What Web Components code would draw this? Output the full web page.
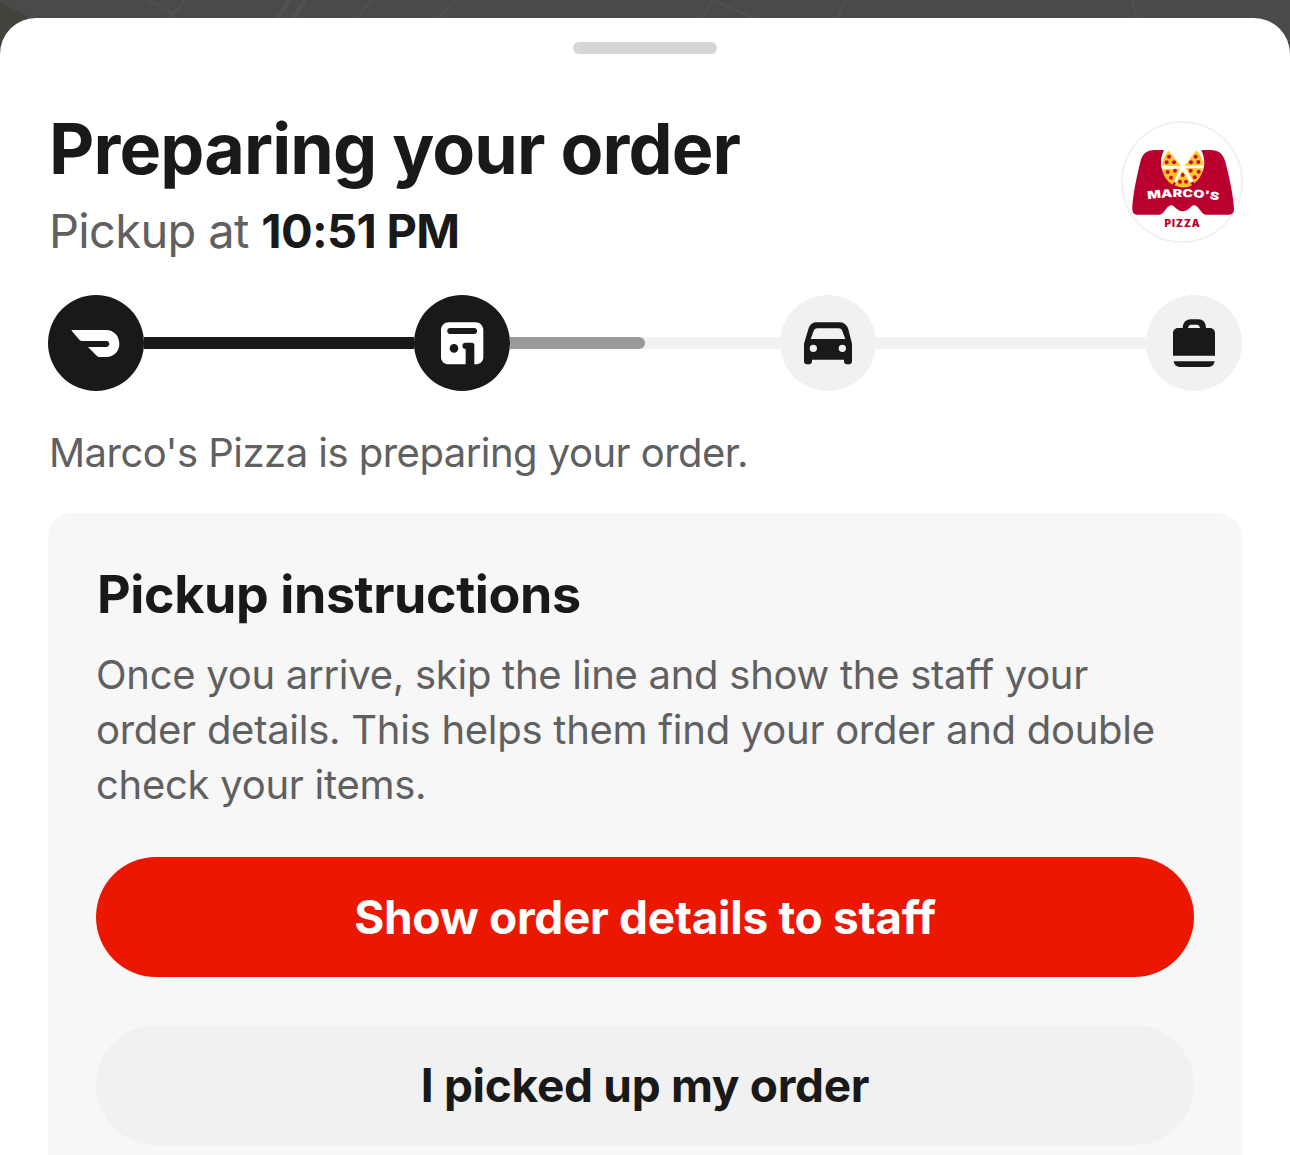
<!DOCTYPE html>
<html><head><meta charset="utf-8">
<style>
html,body{margin:0;padding:0;height:1155px;overflow:hidden;background:#4a4a4a}
</style></head><body>
<map-backdrop></map-backdrop>
<order-sheet></order-sheet>
<template id="map-t">
<style>:host{display:block;position:absolute;left:0;top:0;width:1290px;height:60px}svg{display:block}</style>
<svg width="1290" height="60" viewBox="0 0 1290 60"><path d="M0 2L28 17L0 52Z" fill="#40443a"/>
<g fill="none" stroke="#505050" stroke-width="2.5"><path d="M147 0L172 13M185 0L170 18M372 0L357 18M455 0L438 18M713 0L702 18M713 0L753 18M847 0L837 18M1132 0L1137 18"/></g>
<g fill="none" stroke="#505050" stroke-width="5"><path d="M290 0L277 18M305 0L293 18"/></g></svg>
</template>
<template id="sheet-t">
<style>
:host{display:block;position:relative;margin-top:18px;height:1137px;background:#fff;border-radius:36px 36px 0 0;font-family:Inter,"Liberation Sans",sans-serif;color:#191919;overflow:hidden;box-sizing:border-box;padding:24px 48px 0}
.handle{width:144px;height:12px;border-radius:6px;background:#d6d6d6;margin:0 auto}
header{display:flex;justify-content:space-between;margin-top:55px;padding-left:1px;height:186px}
h1{margin:0;font-size:70px;line-height:80px;font-weight:700;letter-spacing:-.85px}
.sub{font-size:47px;line-height:60px;color:#606060;margin-top:12px;letter-spacing:-.65px}
.sub b{color:#191919;font-weight:700}
.status{font-size:40px;line-height:56px;color:#606060;margin:34px 0 32px 1px;letter-spacing:-.53px}
</style>
<div class="handle"></div>
<header>
 <div><h1>Preparing your order</h1><div class="sub">Pickup at <b>10:51 PM</b></div></div>
 <store-logo></store-logo>
</header>
<order-progress></order-progress>
<div class="status">Marco's Pizza is preparing your order.</div>
<pickup-card></pickup-card>
</template>
<template id="logo-t">
<style>:host{display:block;width:122px;height:122px;margin:12px -1px 0 0}svg{display:block}</style>
<svg width="122" height="122" viewBox="63 63 366 366">
<circle cx="246" cy="246" r="180" fill="#fff" stroke="#f1f1f1" stroke-width="6"/>
<path d="M97 328C97 290 112 220 122 182C128 160 142 150 165 150H192C180 175 178 205 197 228C212 245 232 252 248 252C270 252 288 244 300 228C318 205 315 175 304 150H332C354 150 368 160 375 182C387 225 402 295 402 328C402 338 396 344 388 344H318C310 344 306 338 300 330C294 322 288 314 280 316C272 318 265 334 248 334C232 334 224 318 216 316C208 314 202 322 196 330C190 338 186 344 178 344H110C102 344 97 338 97 328Z" fill="#b9002f"/>
<g fill="#ffc425">
<path d="M243 198L206 152A66 66 0 0 0 187 197Z"/>
<path d="M254 198L289 151A66 66 0 0 1 309 195Z"/>
<path d="M240 206L187 207A62 62 0 0 0 218 254Z"/>
<path d="M248 212L224 256A58 58 0 0 0 276 256Z"/>
<path d="M257 204L308 205A62 62 0 0 1 283 250Z"/>
</g>
<g fill="#c8102e">
<circle cx="207" cy="170" r="6"/><circle cx="200" cy="187" r="6"/><circle cx="222" cy="187" r="6"/>
<circle cx="287" cy="170" r="6"/><circle cx="273" cy="187" r="6"/><circle cx="295" cy="186" r="6"/>
<circle cx="203" cy="216" r="6"/><circle cx="225" cy="212" r="6"/><circle cx="213" cy="233" r="6"/>
<circle cx="248" cy="225" r="6"/><circle cx="240" cy="245" r="6"/><circle cx="258" cy="245" r="6"/>
<circle cx="272" cy="212" r="6"/><circle cx="296" cy="215" r="6"/><circle cx="284" cy="232" r="6"/>
</g>
<path id="arc" d="M143 298Q250 282 358 302" fill="none"/>
<text font-family="Inter,sans-serif" font-weight="900" font-size="33" fill="#fff" textLength="214" lengthAdjust="spacingAndGlyphs"><textPath href="#arc">MARCO'S</textPath></text>
<text x="248" y="382" text-anchor="middle" font-family="Inter,sans-serif" font-weight="900" font-size="30" fill="#b9002f" letter-spacing="3">PIZZA</text>
</svg>
</template>
<template id="progress-t">
<style>
:host{display:block;margin-top:0}
.row{display:flex;align-items:center}
.dot{width:96px;height:96px;flex:none;border-radius:50%;background:#f1f1f1;display:block}
.dot.on{background:#191919}
.dot svg{display:block}
.seg{flex:1;height:12px;background:#f1f1f1;display:flex}
.seg i{display:block;height:12px}
.seg.done{background:#191919}
.seg .part{width:50%;background:#999;border-radius:0 6px 6px 0}
</style>
<div class="row">
<span class="dot on"><svg width="96" height="96" viewBox="54 44 288 288"><path fill="#fff" d="M125 149H228C252 149 268 168 268 190C268 212 252 230 228 230H207C205 230 203 229 201 227L174 200H228C234 200 238 196 238 191C238 186 234 182 228 182H158C154 182 151 181 148 178L125 151Z"/></svg></span>
<div class="seg done"></div>
<span class="dot on"><svg width="96" height="96" viewBox="1152 44 288 288"><path fill="#fff" fill-rule="evenodd" d="M1257 126H1336C1350 126 1360 136 1360 150V230C1360 244 1350 252 1336 252H1257C1243 252 1233 244 1233 230V150C1233 136 1243 126 1257 126ZM1260 143C1249 143 1249 161 1260 161H1333C1344 161 1344 143 1333 143ZM1272 191A13 13 0 1 0 1272 217A13 13 0 1 0 1272 191ZM1306 187C1294 187 1294 206 1306 206H1307V252H1333V194C1333 190 1330 187 1326 187Z"/></svg></span>
<div class="seg"><i class="part"></i></div>
<span class="dot"><svg width="96" height="96" viewBox="60 44 288 288"><path fill="#191919" fill-rule="evenodd" d="M170 126H238C250 126 259 132 264 143L276 190V243C276 249 272 252 268 252H260C256 252 252 249 252 243V238H156V243C156 249 152 252 148 252H140C136 252 132 249 132 243V190L146 143C150 132 158 126 170 126ZM172 144C166 144 163 147 161 152L152 176H256L247 152C245 147 242 144 236 144ZM160 193A11 11 0 1 0 160 215A11 11 0 1 0 160 193ZM247 193A11 11 0 1 0 247 215A11 11 0 1 0 247 193Z"/></svg></span>
<div class="seg"></div>
<span class="dot"><svg width="96" height="96" viewBox="1158 44 288 288"><path fill="#191919" fill-rule="evenodd" d="M1292 117H1316C1328 117 1337 125 1338 143H1350C1359 143 1365 150 1365 159V226H1239V159C1239 150 1245 143 1254 143H1268C1269 125 1280 117 1292 117ZM1293 133C1288 133 1285 137 1284 143H1320C1319 137 1316 133 1311 133Z"/><path fill="#191919" d="M1241 243H1364C1362 254 1356 260 1345 260H1260C1249 260 1243 254 1241 243Z"/></svg></span>
</div>
</template>
<template id="card-t">
<style>
:host{display:block;background:#f7f7f7;border-radius:24px 24px 0 0;padding:48px 48px 0;height:660px;box-sizing:border-box}
h2{margin:0 0 0 1px;font-size:52px;line-height:68px;font-weight:700;letter-spacing:-.4px}
p{margin:18px 0 45px 0;font-size:40px;line-height:55px;color:#606060;letter-spacing:-.27px}
</style>
<h2>Pickup instructions</h2>
<p>Once you arrive, skip the line and show the staff your<br>order details. This helps them find your order and double<br>check your items.</p>
<pill-button kind="primary">Show order details to staff</pill-button>
<pill-button>I picked up my order</pill-button>
</template>
<template id="btn-t">
<style>
:host{display:flex;align-items:center;justify-content:center;height:120px;border-radius:60px;background:#f1f1f1;color:#191919;font-size:46px;font-weight:700;margin-bottom:48px;letter-spacing:-.3px}
:host([kind=primary]){background:#eb1700;color:#fff}
</style><slot></slot>
</template>
<script>
function def(name,tid){customElements.define(name,class extends HTMLElement{constructor(){super();this.attachShadow({mode:'open'}).appendChild(document.getElementById(tid).content.cloneNode(true));}});}
def('map-backdrop','map-t');def('store-logo','logo-t');def('order-progress','progress-t');def('pill-button','btn-t');def('pickup-card','card-t');def('order-sheet','sheet-t');
</script>
</body></html>
